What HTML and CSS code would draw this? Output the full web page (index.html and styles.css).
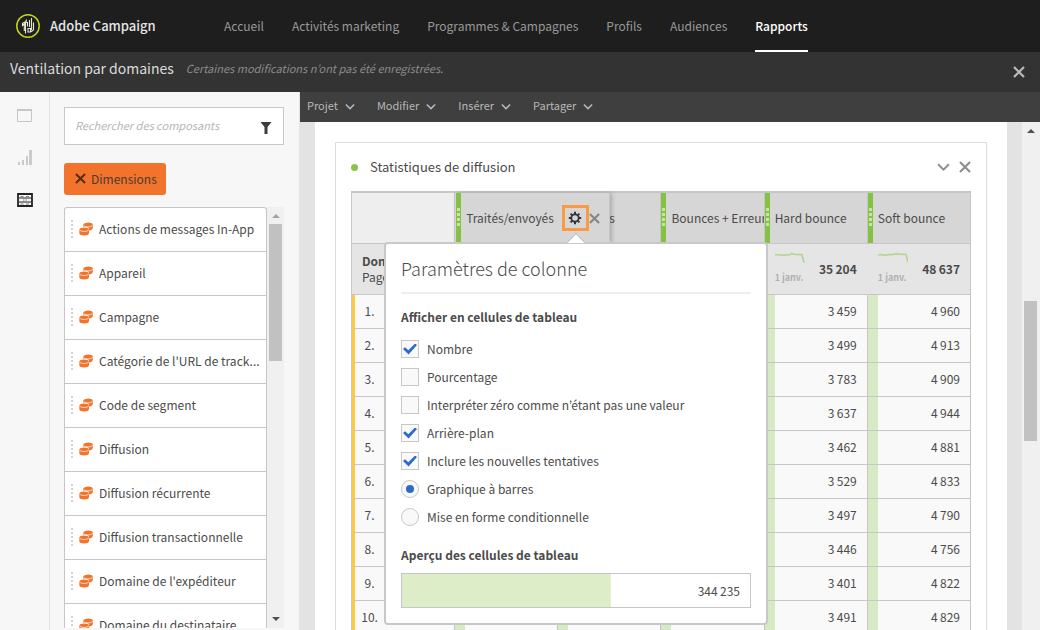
FILE: index.html
```html
<!DOCTYPE html>
<html lang="fr">
<head>
<meta charset="utf-8">
<title>Adobe Campaign – Ventilation par domaines</title>
<meta name="viewport" content="width=device-width, initial-scale=1">
<link rel="stylesheet" href="styles.css">
</head>
<body>
<svg class="defs" aria-hidden="true">
  <symbol id="chevron" viewBox="0 0 12 8"><path d="M1 1.500 6 6.500l5-5" fill="none" stroke="currentColor" stroke-width="1.800"/></symbol>
  <symbol id="cross" viewBox="0 0 12 12"><path d="M1 1l10 10M11 1 1 11" fill="none" stroke="currentColor" stroke-width="2.200"/></symbol>
  <symbol id="dimension" viewBox="0 0 14 14"><path fill="#f2742c" d="M4.200 3C4.200-.3 13.800-.3 13.800 2.500v3.300c0 2-2.500 2.800-3.800 2.700V6.500C9.500 4.800 7 4.600 4.200 5z"/><path fill="#f2742c" d="M.3 7.500C.3 4.700 10 4.700 10 7.500v3.700c0 3-9.700 3-9.700 0z"/><path d="M4.500 3.800c2 1.700 7 1.500 9-.3M.5 8c2 2 7.300 2 9.300 0" fill="none" stroke="#fff" stroke-width=".7"/></symbol>
</svg>

<header class="topbar">
  <div class="brand">
    <svg class="logo" viewBox="0 0 24 24" aria-hidden="true"><circle cx="12" cy="12" r="11.200" fill="none" stroke="#c4d61a" stroke-width="1.500"/><path d="M9.500 19.500V9l-3 2.500V9.300L10 7.500l.500-2M8.300 11v6M15.500 4v12M13.500 6v7M17.500 8.500V16M12 14.500h2.500v3.500H12zM17.500 16l-3 2M10 8.500h1.500v4" fill="none" stroke="#e6e9cf" stroke-width="1.100"/></svg>
    <span>Adobe Campaign</span>
  </div>
  <nav class="nav">
    <a href="#">Accueil</a>
    <a href="#">Activités marketing</a>
    <a href="#">Programmes &amp; Campagnes</a>
    <a href="#">Profils</a>
    <a href="#">Audiences</a>
    <a href="#" class="active" aria-current="page">Rapports</a>
  </nav>
</header>

<div class="titlebar">
  <h1>Ventilation par domaines</h1>
  <em>Certaines modifications n’ont pas été enregistrées.</em>
  <button class="close" aria-label="Fermer"><svg viewBox="0 0 12 12"><use href="#cross"/></svg></button>
</div>

<div class="app">
  <nav class="rail" aria-label="Outils">
    <button aria-label="Panneaux"><svg viewBox="0 0 16 16"><path d="M.5 1.500h14v12H.5z" fill="none" stroke="#c6c6c6"/><path d="M0 1h15v2H0z" fill="#c6c6c6"/></svg></button>
    <button aria-label="Visualisations"><svg viewBox="0 0 16 16"><path d="M1 12h2v3H1zM5 10h2v5H5zM9 6h2v9H9zM12 0h3v15h-3z" fill="#cbcbcb"/></svg></button>
    <button aria-label="Composants"><svg viewBox="0 0 16 16"><path d="M1 2h14v12H1z" fill="none" stroke="#222" stroke-width="1.800"/><path d="M2 6h12M2 10h12" stroke="#222" stroke-width="1.200"/><path d="M3.500 4.500h3M9 4.500h3M6 8h1.500M8.500 8H10M3.500 12h3M9 12h3" stroke="#666" stroke-width=".8"/></svg></button>
  </nav>

  <aside class="side">
    <div class="search">
      <input type="text" placeholder="Rechercher des composants" aria-label="Rechercher des composants">
      <button aria-label="Filtrer"><svg viewBox="0 0 12 12"><path d="M.5 0h11L7.500 5v7h-3V5z" fill="#3c3c3c"/></svg></button>
    </div>
    <button class="chip"><svg viewBox="0 0 12 12" aria-hidden="true"><use href="#cross"/></svg>Dimensions</button>
    <div class="listbox">
      <ul class="list">
        <li><i class="grip"></i><svg><use href="#dimension"/></svg><span>Actions de messages In-App</span></li>
        <li><i class="grip"></i><svg><use href="#dimension"/></svg><span>Appareil</span></li>
        <li><i class="grip"></i><svg><use href="#dimension"/></svg><span>Campagne</span></li>
        <li><i class="grip"></i><svg><use href="#dimension"/></svg><span>Catégorie de l'URL de track...</span></li>
        <li><i class="grip"></i><svg><use href="#dimension"/></svg><span>Code de segment</span></li>
        <li><i class="grip"></i><svg><use href="#dimension"/></svg><span>Diffusion</span></li>
        <li><i class="grip"></i><svg><use href="#dimension"/></svg><span>Diffusion récurrente</span></li>
        <li><i class="grip"></i><svg><use href="#dimension"/></svg><span>Diffusion transactionnelle</span></li>
        <li><i class="grip"></i><svg><use href="#dimension"/></svg><span>Domaine de l'expéditeur</span></li>
        <li><i class="grip"></i><svg><use href="#dimension"/></svg><span>Domaine du destinataire</span></li>
      </ul>
      <div class="scroll"><i class="up light"></i><i class="thumb"></i><i class="down"></i></div>
    </div>
  </aside>

  <main class="work">
    <div class="menubar">
      <button>Projet<svg><use href="#chevron"/></svg></button>
      <button>Modifier<svg><use href="#chevron"/></svg></button>
      <button>Insérer<svg><use href="#chevron"/></svg></button>
      <button>Partager<svg><use href="#chevron"/></svg></button>
    </div>
    <div class="stage">
      <div class="sheet">
        <section class="card">
          <div class="card-head">
            <i class="dot"></i>
            <h2>Statistiques de diffusion</h2>
            <button aria-label="Réduire"><svg class="wide" viewBox="0 0 12 8"><use href="#chevron"/></svg></button>
            <button aria-label="Supprimer"><svg viewBox="0 0 12 12"><use href="#cross"/></svg></button>
          </div>
          <div class="grid">
            <table>
              <thead>
                <tr>
                  <td></td>
                  <th class="current"><div class="col lifted"><i class="handle"></i><span>Traités/envoyés</span>
                    <button class="gear" aria-label="Paramètres de colonne"><svg viewBox="0 0 14 14"><circle cx="7" cy="7" r="3.700" fill="none" stroke="#333" stroke-width="1.800"/><path d="M7 .8V3M7 11v2.200M.8 7H3M11 7h2.200M2.600 2.600l1.500 1.500M9.900 9.900l1.500 1.500M11.400 2.600 9.900 4.100M4.100 9.900l-1.500 1.500" stroke="#333" stroke-width="2"/></svg></button>
                    <button class="remove" aria-label="Supprimer la colonne"><svg viewBox="0 0 12 12"><use href="#cross"/></svg></button></div></th>
                  <th><div class="col tail"><span>s</span></div></th>
                  <th><div class="col"><i class="handle"></i><span>Bounces + Erreurs</span></div></th>
                  <th><div class="col"><i class="handle"></i><span>Hard bounce</span></div></th>
                  <th><div class="col"><i class="handle"></i><span>Soft bounce</span></div></th>
                </tr>
                <tr class="total">
                  <th class="name">Domaine<small>Page</small></th>
                  <td></td><td></td><td></td>
                  <td><div class="sum"><div class="spark"><svg viewBox="0 0 30 12"><path d="M0 3l4-.5 3 .8 4-.5 3 .2 3-1.500 3 1 7 .2 2 8" fill="none" stroke="#b5d593" stroke-width="1.700"/></svg>1 janv.</div><b>35&#8201;204</b></div></td>
                  <td><div class="sum"><div class="spark"><svg viewBox="0 0 30 12"><path d="M0 3l4-.5 3 .8 4-.8 3 .2 4-1 3 .5 7 .2 2 8" fill="none" stroke="#b5d593" stroke-width="1.700"/></svg>1 janv.</div><b>48&#8201;637</b></div></td>
                </tr>
              </thead>
              <tbody>
                <tr><th>1.</th><td></td><td></td><td></td><td>3&#8201;459</td><td>4&#8201;960</td></tr>
                <tr><th>2.</th><td></td><td></td><td></td><td>3&#8201;499</td><td>4&#8201;913</td></tr>
                <tr><th>3.</th><td></td><td></td><td></td><td>3&#8201;783</td><td>4&#8201;909</td></tr>
                <tr><th>4.</th><td></td><td></td><td></td><td>3&#8201;637</td><td>4&#8201;944</td></tr>
                <tr><th>5.</th><td></td><td></td><td></td><td>3&#8201;462</td><td>4&#8201;881</td></tr>
                <tr><th>6.</th><td></td><td></td><td></td><td>3&#8201;529</td><td>4&#8201;833</td></tr>
                <tr><th>7.</th><td></td><td></td><td></td><td>3&#8201;497</td><td>4&#8201;790</td></tr>
                <tr><th>8.</th><td></td><td></td><td></td><td>3&#8201;446</td><td>4&#8201;756</td></tr>
                <tr><th>9.</th><td></td><td></td><td></td><td>3&#8201;401</td><td>4&#8201;822</td></tr>
                <tr><th>10.</th><td></td><td></td><td></td><td>3&#8201;491</td><td>4&#8201;829</td></tr>
              </tbody>
            </table>

            <form class="popover">
              <h3>Paramètres de colonne</h3>
              <fieldset>
                <legend>Afficher en cellules de tableau</legend>
                <label><input type="checkbox" checked>Nombre</label>
                <label><input type="checkbox">Pourcentage</label>
                <label><input type="checkbox">Interpréter zéro comme n’étant pas une valeur</label>
                <label><input type="checkbox" checked>Arrière-plan</label>
                <label><input type="checkbox" checked>Inclure les nouvelles tentatives</label>
                <label><input type="radio" name="style" checked>Graphique à barres</label>
                <label><input type="radio" name="style">Mise en forme conditionnelle</label>
              </fieldset>
              <h4>Aperçu des cellules de tableau</h4>
              <div class="preview">344&#8201;235</div>
            </form>
          </div>
        </section>
      </div>
      <div class="scroll page"><i class="up"></i><i class="thumb"></i></div>
    </div>
  </main>
</div>
</body>
</html>
```
FILE: styles.css
```css
* { box-sizing: border-box; }
body {
  margin: 0;
  height: 100vh;
  display: flex;
  flex-direction: column;
  overflow: hidden;
  font: 12px/20px "Noto Sans CJK KR", "Noto Sans", sans-serif;
  color: #4b4b4b;
  background: #f7f7f7;
}
h1, h2, h3, h4, ul { margin: 0; padding: 0; font-weight: 400; }
button { margin: 0; padding: 0; border: 0; background: none; font: inherit; color: inherit; }
svg { display: block; flex: none; }
.defs { position: absolute; width: 0; height: 0; }

.topbar { flex: none; display: flex; height: 52px; padding-left: 16px; background: #1e1e1e; }
.brand { flex: none; display: flex; align-items: center; gap: 10px; width: 208px; font-size: 13px; font-weight: 500; color: #e6e6e6; }
.logo { width: 24px; height: 24px; }
.nav { display: flex; gap: 28px; }
.nav a { line-height: 52px; color: #999; text-decoration: none; white-space: nowrap; }
.nav .active { color: #fff; font-weight: 500; box-shadow: inset 0 -2px #fff; }

.titlebar { flex: none; display: flex; align-items: center; gap: 12px; height: 40px; padding: 0 15px 8px 10px; background: #333; }
.titlebar h1 { font-size: 14px; color: #dcdcdc; }
.titlebar em { font-size: 11px; color: #8c8c8c; }
.close { margin: 8px 0 0 auto; color: #bbb; }
.close svg { width: 12px; height: 12px; }

.app { flex: 1; display: flex; min-height: 0; }
.rail { flex: none; width: 50px; display: flex; flex-direction: column; align-items: center; gap: 26px; padding-top: 16px; border-right: 1px solid #e2e2e2; }
.rail svg { width: 16px; height: 16px; }

.side { flex: none; width: 249px; display: flex; flex-direction: column; align-items: flex-start; padding: 15px 15px 2px 14px; }
.search { width: 100%; height: 38px; display: flex; align-items: center; padding: 0 11px 0 10px; border: 1px solid #c8c8c8; background: #fff; }
.search input { flex: 1; min-width: 0; border: 0; padding: 0 0 2px; background: none; outline: 0; font: italic 11px/20px "Noto Sans CJK KR", "Noto Sans", sans-serif; }
.search input::placeholder { color: #b5b5b5; }
.search svg { width: 12px; height: 12px; margin-top: 4px; }
.chip { flex: none; display: flex; align-items: center; gap: 5px; height: 32px; margin: 18px 0 12px; padding: 0 9px 1px 11px; border-radius: 3px; background: #f2742c; color: #4b3a30; }
.chip svg { width: 11px; height: 11px; color: #5c2b10; }
.listbox { flex: 1; width: 100%; min-height: 0; display: flex; overflow: hidden; }
.list { flex: 1; min-width: 0; list-style: none; border: 1px solid #c6c6c6; border-bottom: 0; border-radius: 3px 3px 0 0; background: #fff; overflow: hidden; }
.list li { display: flex; align-items: center; height: 44px; padding: 0 0 2px 6px; border-bottom: 1px solid #c6c6c6; white-space: nowrap; }
.list svg { width: 14px; height: 14px; margin: 0 6px; }
.grip { flex: none; width: 2px; height: 18px; background: repeating-linear-gradient(#d2d2d2 0 2px, transparent 2px 4px); }

.scroll { flex: none; width: 17px; display: flex; flex-direction: column; align-items: center; background: #f0f0f0; }
.up { border: 4px solid transparent; border-top: 0; border-bottom-color: #505050; margin: 7px 0 6px; }
.up.light { border-bottom-color: #a3a3a3; }
.down { border: 4px solid transparent; border-bottom: 0; border-top-color: #505050; margin: auto 0 7px; }
.thumb { width: 13px; height: 137px; background: #c1c1c1; }
.scroll.page { width: 18px; padding-right: 1px; }
.page .thumb { height: 140px; margin-top: 162px; }

.work { flex: 1; min-width: 0; display: flex; flex-direction: column; background: #e3e3e3; }
.menubar { flex: none; display: flex; gap: 22px; height: 30px; padding: 0 0 4px 7px; margin-left: 1px; background: #3f3f3f; }
.menubar button { display: flex; align-items: center; gap: 7px; font-size: 11px; color: #b8b8b8; }
.menubar svg { width: 10px; height: 7px; margin-top: 3px; }
.stage { flex: 1; min-height: 0; display: flex; gap: 15px; padding-left: 16px; overflow: hidden; }
.sheet { flex: 1; min-width: 0; padding: 20px; background: #fff; }
.card { border: 1px solid #dcdcdc; padding: 0 15px 15px; }
.card-head { display: flex; align-items: center; height: 48px; gap: 9px; }
.dot { width: 7px; height: 7px; border-radius: 50%; background: #8bc34a; }
.card-head h2 { flex: 1; font-size: 13px; margin-left: 3px; }
.card-head button { color: #8e8e8e; }
.card-head svg { width: 12px; height: 12px; }
.card-head .wide { width: 13px; }

.grid { position: relative; }
table { width: 100%; table-layout: fixed; border-spacing: 0; border: solid #c6c6c6; border-width: 2px 0 0 1px; }
th, td { height: 34px; padding: 0; border: solid #c6c6c6; border-width: 0 1px 1px 0; font-weight: 400; }
thead td, thead th { height: 51px; background: #eee; }
thead th { background: #d6d6d6; }
.col { display: flex; align-items: center; height: 50px; overflow: hidden; white-space: nowrap; font-size: 12px; }
.handle { flex: none; width: 5px; height: 50px; margin-right: 5px; padding: 15px 1px; background: #84c341; }
.handle::before { content: ""; display: block; height: 20px; background: repeating-linear-gradient(#c6e5a4 0 3px, #84c341 3px 5px); }
.current { position: relative; }
.col.lifted { position: absolute; top: 0; left: 0; width: 155px; padding-left: 1px; background: #d6d6d6; border-right: 1px solid #c6c6c6; box-shadow: 2px 0 4px #0003; }
.col.tail { padding-left: 51px; }
.gear { flex: none; margin-left: 8px; width: 27px; height: 26px; border: 3px solid #fb9a45; display: grid; place-items: center; }
.gear svg { width: 14px; height: 14px; }
.remove { color: #858585; }
.remove svg { width: 11px; height: 11px; }
.total th, .total td { background: #e5e5e5; border-right-color: #e5e5e5; }
.total td:last-child { border-right-color: #c6c6c6; }
.total .name { padding-left: 10px; text-align: left; font-weight: 700; line-height: 16px; }
.name small { display: block; font-size: 12px; font-weight: 400; }
.sum { display: flex; align-items: center; justify-content: space-between; padding: 0 10px; }
.spark { font-size: 9px; line-height: 16px; font-weight: 700; color: #b0b0b0; }
.spark svg { width: 30px; height: 12px; margin-bottom: 6px; }
tbody th { padding: 0 70px 2px 0; border-left: 3px solid #ffc940; text-align: center; background: #f9f9f9; }
tbody td { padding: 0 10px 2px 0; text-align: right; background: linear-gradient(#d8e9c6, #d8e9c6) 0 0 / 10% 100% no-repeat #f9f9f9; }

.popover { position: absolute; top: 51px; left: 33px; width: 384px; padding: 9px 15px 15px; border: 2px solid #c8c8c8; border-radius: 4px; background: #fff; }
.popover::before { content: ""; position: absolute; top: -9px; left: 182px; width: 14px; height: 14px; background: #fff; border: solid #c8c8c8; border-width: 2px 0 0 2px; transform: rotate(45deg); clip-path: polygon(0 0, 100% 0, 0 100%); }
.popover h3 { padding-bottom: 9px; border-bottom: 2px solid #eee; font-size: 18px; line-height: 30px; font-weight: 300; }
fieldset { margin: 13px 0 0; padding: 0; border: 0; }
legend, h4 { padding: 0; font-size: 12px; font-weight: 700; line-height: 20px; }
legend { margin-bottom: 8px; }
label { display: flex; align-items: center; gap: 8px; height: 28px; }
label input { appearance: none; flex: none; width: 18px; height: 18px; margin: 0; border: 1px solid #c8c8c8; background: #f9f9f9; display: grid; place-items: center; }
input[type=checkbox]:checked::before { content: ""; width: 14px; height: 11px; background: #2c6bc9; clip-path: polygon(0 50%, 15% 34%, 38% 62%, 86% 0, 100% 14%, 40% 100%); }
input[type=radio] { border-radius: 50%; }
input[type=radio]:checked::before { content: ""; width: 8px; height: 8px; border-radius: 50%; background: #2c6bc9; }
h4 { margin: 14px 0 8px; }
.preview { height: 35px; padding-right: 10px; border: 1px solid #c6c6c6; line-height: 33px; text-align: right; background: linear-gradient(#dcedc8, #dcedc8) 0 0 / 60% 100% no-repeat; }
```
